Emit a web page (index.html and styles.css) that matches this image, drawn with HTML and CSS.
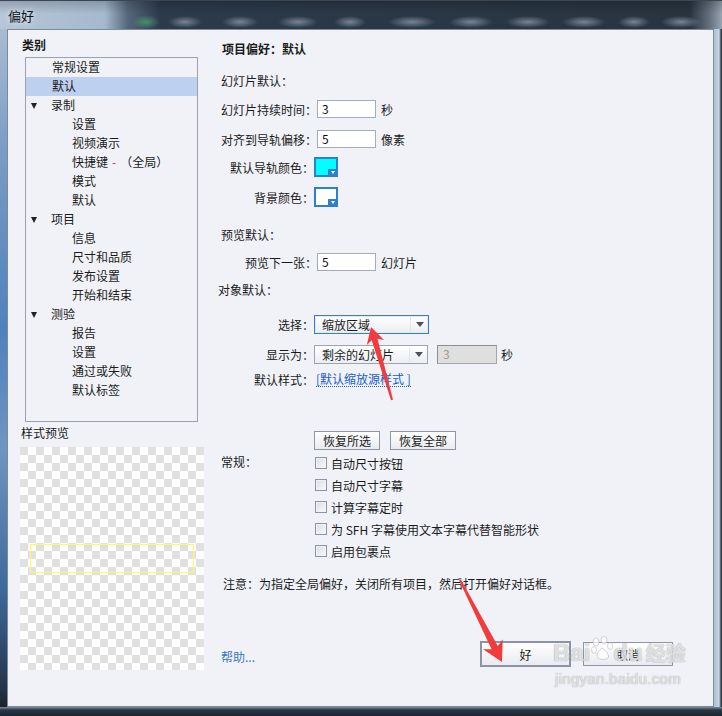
FILE: index.html
```html
<!DOCTYPE html>
<html lang="zh-CN">
<head>
  <meta charset="UTF-8" />
  <meta name="viewport" content="width=device-width, initial-scale=1.0" />
  <title>偏好</title>
  <link rel="stylesheet" href="styles.css">
</head>
<body>
  <div class="window">
    <div class="titlebar">
      <span class="title">偏好</span>
    </div>

    <div class="frame">
      <div class="edge-left"></div>

      <div class="client">
        <aside class="sidebar">
          <div class="side-heading">类别</div>
          <ul class="tree">
            <li class="tree-item">常规设置</li>
            <li class="tree-item selected">默认</li>
            <li class="tree-item group">录制</li>
            <li class="tree-item sub">设置</li>
            <li class="tree-item sub">视频演示</li>
            <li class="tree-item sub">快捷键 <span class="dash">-</span> （全局）</li>
            <li class="tree-item sub">模式</li>
            <li class="tree-item sub">默认</li>
            <li class="tree-item group">项目</li>
            <li class="tree-item sub">信息</li>
            <li class="tree-item sub">尺寸和品质</li>
            <li class="tree-item sub">发布设置</li>
            <li class="tree-item sub">开始和结束</li>
            <li class="tree-item group">测验</li>
            <li class="tree-item sub">报告</li>
            <li class="tree-item sub">设置</li>
            <li class="tree-item sub">通过或失败</li>
            <li class="tree-item sub">默认标签</li>
          </ul>
          <div class="preview-label">样式预览</div>
          <div class="preview">
            <div class="preview-box"></div>
          </div>
        </aside>

        <main class="panel">
          <h1 class="panel-title">项目偏好：默认</h1>

          <div class="row section r-slide">幻灯片默认：</div>

          <div class="row r-duration">
            <span class="label wide">幻灯片持续时间：</span>
            <span class="input">3</span>
            <span class="unit">秒</span>
          </div>

          <div class="row r-snap">
            <span class="label wide">对齐到导轨偏移：</span>
            <span class="input">5</span>
            <span class="unit">像素</span>
          </div>

          <div class="row swatch-row r-guide">
            <span class="label">默认导轨颜色：</span>
            <span class="swatch cyan"><i class="swatch-drop"></i></span>
          </div>

          <div class="row swatch-row r-bg">
            <span class="label">背景颜色：</span>
            <span class="swatch"><i class="swatch-drop"></i></span>
          </div>

          <div class="row section r-preview">预览默认：</div>

          <div class="row r-next">
            <span class="label wide">预览下一张：</span>
            <span class="input">5</span>
            <span class="unit">幻灯片</span>
          </div>

          <div class="row section r-object">对象默认：</div>

          <div class="row select-row r-choose">
            <span class="label">选择：</span>
            <span class="select focused"><span class="select-text">缩放区域</span><i class="caret"></i></span>
          </div>

          <div class="row select-row r-show">
            <span class="label">显示为：</span>
            <span class="select"><span class="select-text">剩余的幻灯片</span><i class="caret"></i></span>
            <span class="input disabled">3</span>
            <span class="unit">秒</span>
          </div>

          <div class="row r-style">
            <span class="label">默认样式：</span>
            <a class="link">[默认缩放源样式 ]</a>
          </div>

          <div class="row r-reset">
            <span class="label"></span>
            <span class="btn">恢复所选</span>
            <span class="btn">恢复全部</span>
          </div>

          <div class="general">
            <div class="general-label">常规：</div>
            <ul class="checks">
              <li class="check"><i class="box"></i>自动尺寸按钮</li>
              <li class="check"><i class="box"></i>自动尺寸字幕</li>
              <li class="check"><i class="box"></i>计算字幕定时</li>
              <li class="check"><i class="box"></i>为 SFH 字幕使用文本字幕代替智能形状</li>
              <li class="check"><i class="box"></i>启用包裹点</li>
            </ul>
          </div>

          <p class="note">注意：为指定全局偏好，关闭所有项目，然后打开偏好对话框。</p>

          <div class="footer">
            <a class="help">帮助...</a>
            <div class="actions">
              <span class="btn big default">好</span>
              <span class="btn big">取消</span>
            </div>
          </div>
        </main>
      </div>

      <div class="edge-right"></div>
    </div>

    <div class="edge-bottom"></div>

    <!-- annotation arrows drawn over the dialog -->
    <svg class="arrows" width="722" height="716" viewBox="0 0 722 716">
      <polygon points="371,327 384.1,339.9 377.5,338.7 393,399.7 391,400.3 371.7,340.3 366.8,344.9" />
      <polygon points="502,662 502.7,639.2 497.8,646.1 460.9,579.5 459.1,580.5 491.6,649.3 483.1,649.2" />
    </svg>

    <div class="watermark">
      <div class="wm-logo">
        <span>Bai</span>
        <svg class="paw" width="22" height="26" viewBox="0 0 22 26">
          <ellipse cx="5" cy="6" rx="3" ry="4" />
          <ellipse cx="13" cy="4" rx="3" ry="4" />
          <ellipse cx="19" cy="10" rx="2.5" ry="3.5" />
          <ellipse cx="3" cy="14" rx="2.5" ry="3.5" />
          <path d="M11 12 C 6 16, 4 22, 9 23 C 11 23.5, 13 23.5, 15 23 C 20 22, 17 16, 11 12 Z" />
        </svg>
        <span>du</span>
        <span class="wm-cn">经验</span>
      </div>
      <div class="wm-url">jingyan.baidu.com</div>
    </div>
  </div>
</body>
</html>
```

FILE: styles.css
```css
* {
  margin: 0;
  padding: 0;
  box-sizing: border-box;
}

body {
  background-color: #fff;
  color: #1b1b1b;
  font-family: "Noto Sans CJK SC", "Noto Sans", sans-serif;
  font-size: 12px;
}

ul {
  list-style: none;
}

/* window frame */
.window {
  position: relative;
  width: 722px;
  height: 716px;
  display: flex;
  flex-direction: column;
  overflow: hidden;
}

.titlebar {
  height: 29px;
  flex: none;
  display: flex;
  align-items: center;
  padding-left: 8px;
  border-top: 1px solid #3a4654;
  background:
    linear-gradient(180deg, rgba(0, 0, 0, 0.18), rgba(0, 0, 0, 0) 45%),
    radial-gradient(ellipse 14px 7px at 146px 21px, rgba(70, 150, 110, 0.9), transparent),
    radial-gradient(ellipse 17px 6px at 185px 21px, rgba(135, 146, 160, 0.85), transparent),
    radial-gradient(ellipse 18px 6px at 240px 21px, rgba(135, 146, 160, 0.85), transparent),
    radial-gradient(ellipse 20px 6px at 298px 21px, rgba(135, 146, 160, 0.85), transparent),
    radial-gradient(ellipse 16px 6px at 350px 21px, rgba(135, 146, 160, 0.85), transparent),
    radial-gradient(ellipse 24px 6px at 412px 21px, rgba(135, 146, 160, 0.85), transparent),
    radial-gradient(ellipse 22px 6px at 471px 21px, rgba(135, 146, 160, 0.85), transparent),
    radial-gradient(ellipse 22px 6px at 528px 21px, rgba(135, 146, 160, 0.85), transparent),
    radial-gradient(ellipse 22px 6px at 584px 21px, rgba(135, 146, 160, 0.85), transparent),
    radial-gradient(ellipse 16px 6px at 634px 21px, rgba(135, 146, 160, 0.85), transparent),
    radial-gradient(ellipse 20px 6px at 681px 21px, rgba(135, 146, 160, 0.85), transparent),
    linear-gradient(90deg, #b7c6d8 0, #a5b8cd 105px, #55667a 128px, #2c3a4a 160px, #28343f 690px, #66727f 710px, #98a4b1 722px);
}

.title {
  color: #0c1620;
  text-shadow: 0 0 6px rgba(255, 255, 255, 0.9);
  font-size: 13px;
}

.frame {
  flex: 1;
  display: flex;
}

.edge-left {
  width: 7px;
  background: linear-gradient(180deg, #a8bcd3 0, #7b9cc4 120px, #4e82bd 300px, #6f95c2 420px, #3e6a9c 560px, #24354a 660px, #1a2430 100%);
}

.edge-right {
  width: 8px;
  background: linear-gradient(90deg, #aabdd2 0, #c8d6e5 5px, #3a4654 7px, #26303c 8px);
}

.edge-bottom {
  height: 9px;
  flex: none;
  background: linear-gradient(180deg, #7f8d9c 0, #2a3644 3px, #1c2631 100%);
}

.client {
  flex: 1;
  display: flex;
  background-color: #f0f2f7;
  border: 1px solid #7d8a99;
}

/* left column */
.sidebar {
  width: 196px;
  padding-left: 12px;
  flex: none;
}

.side-heading {
  margin: 6px 0 0 2px;
  height: 18px;
  line-height: 18px;
  font-weight: 700;
}

.tree {
  margin: 3px 0 0 5px;
  width: 173px;
  height: 365px;
  border: 1px solid #9aa1b1;
}

.tree-item {
  height: 19px;
  padding: 0 0 2px 26px;
  display: flex;
  align-items: center;
  white-space: nowrap;
}

.tree-item.selected {
  background-color: #bed0ef;
}

.tree-item.group {
  padding-left: 5px;
}

.tree-item.group::before {
  content: "";
  width: 0;
  height: 0;
  margin: 2px 14px 0 0;
  border-left: 3.5px solid transparent;
  border-right: 3.5px solid transparent;
  border-top: 6px solid #222;
}

.tree-item.sub {
  padding-left: 46px;
}

.dash {
  color: #d03030;
  margin: 0 4px;
}

.preview-label {
  margin: 2px 0 0 1px;
  height: 18px;
  line-height: 18px;
}

.preview {
  margin-top: 5px;
  width: 184px;
  height: 223px;
  padding-top: 97px;
  background-color: #fff;
  background-image: conic-gradient(#fff 25%, #e0e0e0 0 50%, #fff 0 75%, #e0e0e0 0);
  background-size: 16px 16px;
}

.preview-box {
  margin: 0 10px;
  height: 29px;
  border: 1px solid #fbfb63;
}

/* right column */
.panel {
  flex: 1;
  margin-left: 15px;
  padding: 0 40px 0 2px;
  display: flex;
  flex-direction: column;
}

.panel-title {
  margin-top: 10px;
  height: 18px;
  line-height: 18px;
  font-size: 12px;
  font-weight: 700;
  margin-left: 1px;
}

.row {
  display: flex;
  align-items: center;
  height: 18px;
  white-space: nowrap;
}

.r-slide { margin-top: 13px; }
.r-duration { margin-top: 11px; }
.r-snap { margin-top: 12px; }
.r-guide { margin-top: 9px; }
.r-bg { margin-top: 10px; }
.r-preview { margin-top: 18px; }
.r-next { margin-top: 10px; }
.r-object { margin-top: 9px; margin-left: -3px; }
.r-choose { margin-top: 17px; }
.r-show { margin-top: 11px; }
.r-style { margin-top: 6px; }
.r-reset { margin-top: 43px; }

.swatch-row {
  height: 20px;
}

.select-row {
  height: 19px;
}

.label {
  width: 93px;
  text-align: right;
  flex: none;
}

.label.wide {
  width: 96px;
}

.input {
  width: 59px;
  height: 18px;
  line-height: 16px;
  padding-left: 4px;
  background-color: #fff;
  border: 1px solid #a4abb9;
  color: #111;
}

.input.disabled {
  margin-left: 9px;
  width: 60px;
  height: 19px;
  padding-left: 5px;
  background-color: #dfdfdf;
  border-color: #a7a7a7;
  border-top-color: #8f8f8f;
  border-left-color: #8f8f8f;
  color: #9a9a9a;
}

.unit {
  margin-left: 5px;
}

.r-show .unit {
  margin-left: 4px;
}

.swatch {
  position: relative;
  width: 24px;
  height: 20px;
  border: 2px solid #2d7fcf;
  background-color: #fff;
}

.swatch.cyan {
  background-color: #00ffff;
}

/* small dropdown tab in the swatch corner */
.swatch-drop {
  position: absolute;
  right: -1px;
  bottom: -1px;
  width: 9px;
  height: 7px;
  background-color: #2d7fcf;
  display: flex;
  align-items: center;
  justify-content: center;
}

.swatch-drop::after {
  content: "";
  border-left: 2.5px solid transparent;
  border-right: 2.5px solid transparent;
  border-top: 3px solid #fff;
}

.select {
  width: 114px;
  height: 19px;
  display: flex;
  align-items: center;
  border: 1px solid #9ca4b4;
  background: linear-gradient(180deg, #ffffff, #eceef2);
}

.select.focused {
  width: 115px;
  border-color: #3b7dcc;
  box-shadow: inset 0 0 0 1px #dfe9f7;
}

.select-text {
  flex: 1;
  padding-left: 7px;
}

.caret {
  width: 18px;
  height: 15px;
  border-left: 1px solid #e2e5eb;
  display: flex;
  align-items: center;
  justify-content: center;
}

.caret::after {
  content: "";
  border-left: 4px solid transparent;
  border-right: 4px solid transparent;
  border-top: 5px solid #4c5262;
}

.link {
  margin-left: 2px;
  color: #1b5fc6;
  border-bottom: 1px dotted #1b5fc6;
  line-height: 15px;
}

.btn {
  display: flex;
  align-items: center;
  justify-content: center;
  width: 66px;
  height: 19px;
  border: 1px solid #8e96a6;
  background: linear-gradient(180deg, #ffffff, #e9ebef);
}

.r-reset .label {
  width: 93px;
}

.r-reset .btn + .btn {
  margin-left: 10px;
}

.general {
  margin-top: 3px;
  display: flex;
}

.general-label {
  width: 94px;
  height: 22px;
  line-height: 20px;
  flex: none;
}

.check {
  height: 22px;
  display: flex;
  align-items: center;
  white-space: nowrap;
}

.box {
  width: 12px;
  height: 12px;
  margin-right: 4px;
  border: 1px solid #8c94a4;
  background: linear-gradient(135deg, #d9dde4, #fafbfc);
  box-shadow: inset 0 0 0 1px #f1f2f4;
}

.note {
  margin: 13px 0 0 2px;
  height: 18px;
  line-height: 18px;
  white-space: nowrap;
}

.footer {
  margin-top: 48px;
  height: 26px;
  display: flex;
  align-items: center;
}

.help {
  color: #3a76c6;
  margin-top: 4px;
}

.actions {
  margin-left: auto;
  display: flex;
  align-items: center;
  gap: 12px;
}

.btn.big {
  width: 90px;
  height: 24px;
}

.btn.default {
  width: 91px;
  height: 26px;
  border: 2px solid #8b93a5;
}

/* overlays */
.arrows {
  position: absolute;
  top: 0;
  left: 0;
  pointer-events: none;
}

.arrows polygon {
  fill: #f23b3d;
}

.watermark {
  position: absolute;
  left: 553px;
  top: 636px;
  color: rgba(255, 255, 255, 0.7);
  pointer-events: none;
}

.wm-logo {
  display: flex;
  align-items: flex-end;
  font-family: "Liberation Sans", sans-serif;
  font-weight: 700;
  font-size: 24px;
  line-height: 30px;
  text-shadow: 0 0 1px rgba(110, 110, 110, 0.45), 0 0 1px rgba(110, 110, 110, 0.45);
}

.paw {
  margin: 0 0 6px 1px;
  fill: rgba(255, 255, 255, 0.7);
  stroke: rgba(130, 130, 130, 0.4);
  stroke-width: 0.8;
}

.wm-cn {
  margin-left: 3px;
  font-family: "Noto Sans CJK SC", sans-serif;
  font-size: 20px;
}

.wm-url {
  margin: 2px 0 0 2px;
  font-family: "Liberation Sans", sans-serif;
  font-size: 15px;
  letter-spacing: 0.3px;
  text-shadow: 0 0 1px rgba(110, 110, 110, 0.45), 0 0 1px rgba(110, 110, 110, 0.45);
}
```
